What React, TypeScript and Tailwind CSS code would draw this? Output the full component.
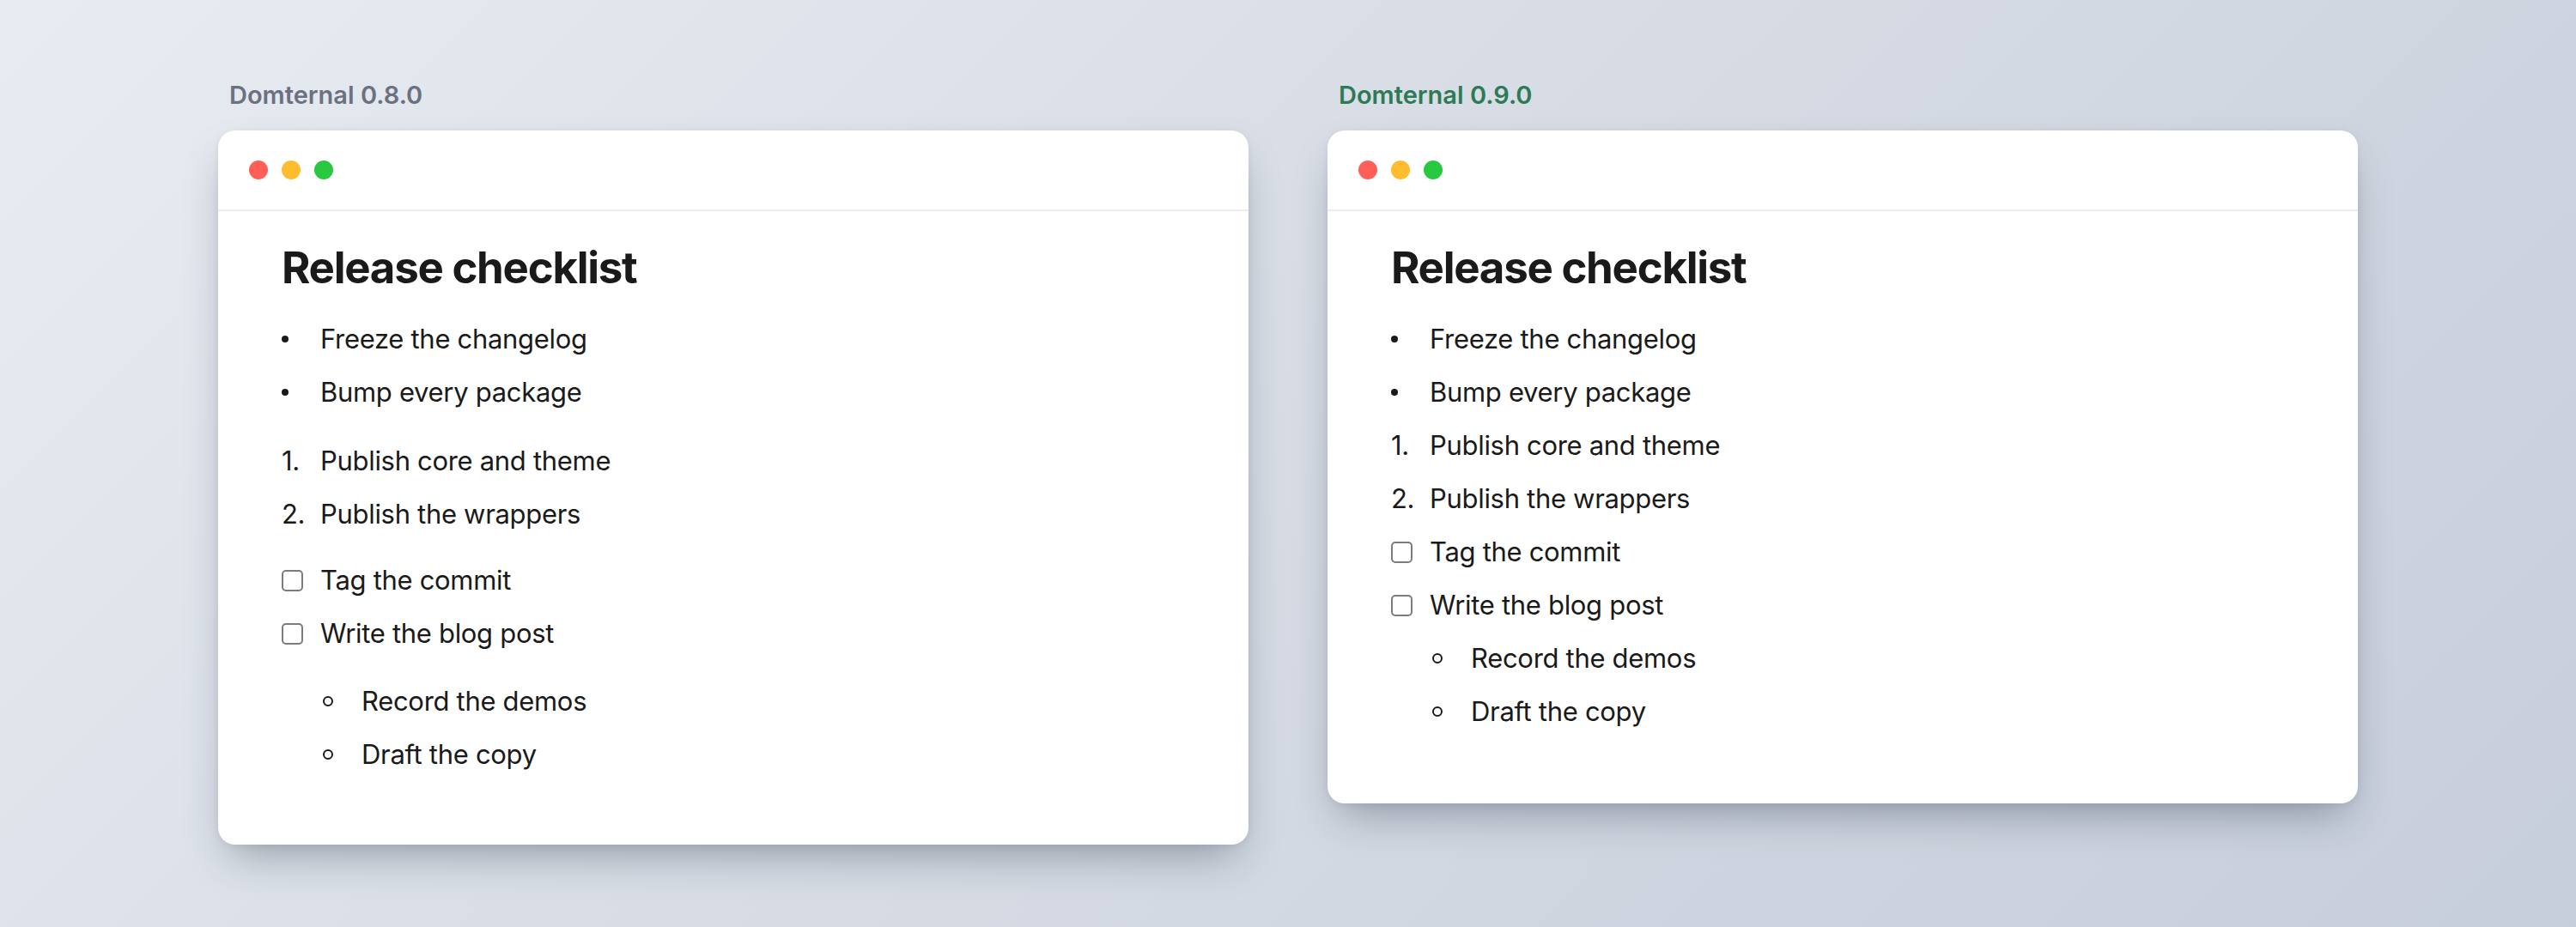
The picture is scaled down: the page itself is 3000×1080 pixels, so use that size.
import React from 'react';

type Group = {
  kind: 'bullet' | 'ordered' | 'task' | 'nested';
  items: string[];
};

const groups: Group[] = [
  { kind: 'bullet', items: ['Freeze the changelog', 'Bump every package'] },
  { kind: 'ordered', items: ['Publish core and theme', 'Publish the wrappers'] },
  { kind: 'task', items: ['Tag the commit', 'Write the blog post'] },
  { kind: 'nested', items: ['Record the demos', 'Draft the copy'] },
];

// extra space the old renderer put between separate lists
const oldGaps = ['', 'mt-[18px]', 'mt-[15px]', 'mt-[17px]'];

const Marker: React.FC<{ kind: Group['kind']; index: number }> = ({ kind, index }) => {
  if (kind === 'bullet') return <span className="w-[8px] h-[8px] rounded-full bg-[#1a1a1a]" />;
  if (kind === 'ordered') return <span>{index + 1}.</span>;
  if (kind === 'task')
    return <span className="w-[25px] h-[25px] rounded-[5px] border-2 border-[#7c7c7c] bg-white" />;
  return <span className="w-[12px] h-[12px] rounded-full border-2 border-[#1a1a1a]" />;
};

const Window: React.FC<{ label: string; labelClass: string; legacy?: boolean; pb: string }> = ({
  label,
  labelClass,
  legacy,
  pb,
}) => (
  <div className="flex flex-col">
    <div className={`ml-[13px] mb-[27px] text-[29px] leading-[29px] font-semibold ${labelClass}`}>{label}</div>
    <div className="w-[1200px] bg-white rounded-[20px] shadow-[0_24px_50px_-14px_rgba(30,41,59,0.38),0_2px_8px_rgba(30,41,59,0.06)] overflow-hidden">
      <div className="h-[94px] border-b-2 border-[#ededf0] flex items-center pl-[36px] gap-[16px]">
        <span className="w-[22px] h-[22px] rounded-full bg-[#ff5f57]" />
        <span className="w-[22px] h-[22px] rounded-full bg-[#febc2e]" />
        <span className="w-[22px] h-[22px] rounded-full bg-[#28c840]" />
      </div>
      <div className={`pl-[74px] pt-[35px] ${pb} text-[#1a1a1a]`}>
        <h1 className="h-[62px] text-[51px] leading-[62px] font-bold tracking-[-0.025em]">Release checklist</h1>
        <div className="mt-[21px] text-[31px] leading-[62px] tracking-[-0.01em]">
          {groups.map((g, gi) => (
            <div key={g.kind} className={`${legacy ? oldGaps[gi] : ''} ${g.kind === 'nested' ? 'ml-[48px]' : ''}`}>
              {g.items.map((item, i) => (
                <div key={item} className="flex items-center h-[62px]">
                  <div className="w-[45px] shrink-0 flex items-center">
                    <Marker kind={g.kind} index={i} />
                  </div>
                  <span>{item}</span>
                </div>
              ))}
            </div>
          ))}
        </div>
      </div>
    </div>
  </div>
);

export default function App() {
  return (
    <div className="w-[3000px] h-[1080px] overflow-hidden font-[Inter,sans-serif] bg-[linear-gradient(135deg,#e8ecf2_0%,#d6dbe4_50%,#c7cedb_100%)] flex justify-center items-start gap-[92px] pt-[96px]">
      <Window label="Domternal 0.8.0" labelClass="text-[#6b7180]" legacy pb="pb-[74px]" />
      <Window label="Domternal 0.9.0" labelClass="text-[#2d7a57]" pb="pb-[76px]" />
    </div>
  );
}
